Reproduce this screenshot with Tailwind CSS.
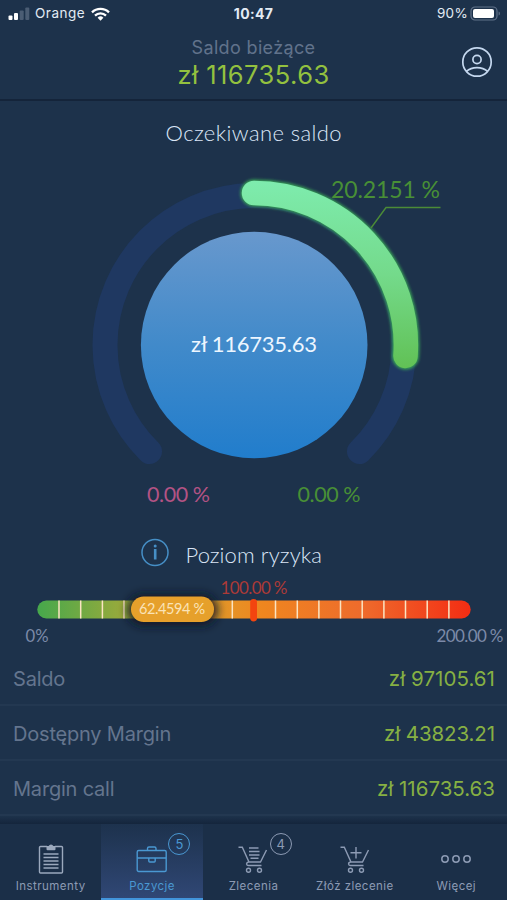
<!DOCTYPE html>
<html lang="pl">
<head>
    <meta charset="UTF-8">
    <meta name="viewport" content="width=device-width, initial-scale=1.0">
    <title>Pozycje - Saldo bieżące</title>
    <!-- Tailwind CSS CDN -->
    <script src="https://cdn.jsdelivr.net/npm/@tailwindcss/browser@4"></script>
</head>
<body class="bg-[#1d324b] font-['Inter',sans-serif]">
    <div class="w-[507px] h-[900px] flex flex-col overflow-hidden">

        <!-- Pasek stanu -->
        <div class="h-7 shrink-0 grid grid-cols-3 items-center text-[13.5px] leading-none text-[#e3ebf4]">
            <div class="flex items-center pl-2">
                <svg width="23" height="14" viewBox="0 0 23 14" class="shrink-0">
                    <rect x="0.5" y="8.5" width="4" height="4.5" rx="1" fill="#fff"/>
                    <rect x="6" y="6" width="4" height="7" rx="1" fill="#fff"/>
                    <rect x="11.7" y="3.5" width="4" height="9.5" rx="1" fill="#4b5d74"/>
                    <rect x="17.3" y="0.5" width="4" height="12.5" rx="1" fill="#4b5d74"/>
                </svg>
                <span class="ml-1 tracking-[0.5px]">Orange</span>
                <svg width="19" height="14" viewBox="0 0 19 14" class="ml-1.5 mb-px shrink-0" fill="none" stroke="#fff" stroke-width="2.3">
                    <path d="M1 5.4a12.2 12.2 0 0 1 17 0"/>
                    <path d="M4 8.6a7.8 7.8 0 0 1 11 0"/>
                    <path d="M9.5 13.8l-2.9-3a4.1 4.1 0 0 1 5.8 0z" fill="#fff" stroke="none"/>
                </svg>
            </div>
            <div class="text-center font-bold text-[14px] tracking-[0.3px]">10:47</div>
            <div class="flex items-center justify-end pr-1.5">
                <span class="tracking-[0.3px]">90%</span>
                <svg width="31" height="15" viewBox="0 0 31 15" class="ml-0.5 mb-0.5">
                    <rect x="1" y="1" width="26" height="13" rx="4" fill="none" stroke="#61728a" stroke-width="1.2"/>
                    <rect x="3" y="3" width="21" height="9" rx="2" fill="#fff"/>
                    <path d="M28.6 5.5v4c1.7-.5 1.7-3.5 0-4z" fill="#61728a"/>
                </svg>
            </div>
        </div>

        <!-- Saldo bieżące -->
        <header class="h-[73px] shrink-0 relative flex flex-col items-center pt-2 border-b-2 border-[#14243a]">
            <div class="pt-px text-[18px] leading-[22px] tracking-[0.35px] text-[#61728b]">Saldo bieżące</div>
            <div class="text-[25.5px] leading-8 tracking-[0.45px] text-[#93c13f]">zł 116735.63</div>
            <svg width="32" height="32" viewBox="0 0 32 32" class="absolute right-[14px] top-[18px]" fill="none" stroke="#c5d8ef" stroke-width="1.7">
                <circle cx="16" cy="16" r="14.2"/>
                <circle cx="16" cy="13.5" r="4.1"/>
                <path d="M5.5 25.3c5.3-5 15.7-5 21 0"/>
            </svg>
        </header>

        <!-- Wykres oczekiwanego salda -->
        <section class="h-[429px] shrink-0">
            <svg width="507" height="429" viewBox="0 101 507 429" class="font-['Lato',sans-serif]">
                <defs>
                    <linearGradient id="disc" x1="0" y1="0" x2="0" y2="1">
                        <stop offset="0" stop-color="#6898cd"/>
                        <stop offset="0.5" stop-color="#418aca"/>
                        <stop offset="1" stop-color="#217dcc"/>
                    </linearGradient>
                    <linearGradient id="arc" gradientUnits="userSpaceOnUse" x1="0" y1="180" x2="0" y2="369">
                        <stop offset="0" stop-color="#7eecae"/>
                        <stop offset="0.5" stop-color="#74da8b"/>
                        <stop offset="1" stop-color="#61c155"/>
                    </linearGradient>
                    <filter id="glow" filterUnits="userSpaceOnUse" x="220" y="150" width="230" height="250">
                        <feGaussianBlur stdDeviation="1.7"/>
                    </filter>
                </defs>
                <text x="165.5" y="141" font-size="22" textLength="176" fill="#dbe6f7" class="font-light">Oczekiwane saldo</text>

                <path d="M149.5 451.5A149.5 149.5 0 1 1 359.5 451.5" fill="none" stroke="#1f3861" stroke-width="25" stroke-linecap="round"/>
                <path d="M254 193A152 152 0 0 1 405.5 356" fill="none" stroke="#37a457" stroke-width="27" stroke-linecap="round" filter="url(#glow)"/>
                <path d="M254 193A152 152 0 0 1 405.5 356" fill="none" stroke="url(#arc)" stroke-width="24.5" stroke-linecap="round"/>

                <circle cx="254.2" cy="345" r="113.3" fill="url(#disc)"/>
                <text x="191" y="352" font-size="22" textLength="126" fill="#edf6ff">zł 116735.63</text>

                <path d="M371 228L386 207.5H440.5" fill="none" stroke="#4b8b37" stroke-width="1.4"/>
                <text x="331" y="197.5" font-size="23" textLength="109" fill="#488f36">20.2151 %</text>
                <text x="147" y="501.5" font-size="21.5" textLength="63" fill="#b25384">0.00 %</text>
                <text x="297.5" y="501.5" font-size="21.5" textLength="63" fill="#488f36">0.00 %</text>
            </svg>
        </section>

        <!-- Poziom ryzyka -->
        <section class="h-[121px] shrink-0">
            <svg width="507" height="121" viewBox="0 530 507 121" class="font-['Lato',sans-serif]">
                <defs>
                    <linearGradient id="risk">
                        <stop offset="0" stop-color="#46a84c"/>
                        <stop offset="0.2" stop-color="#9aaa3b"/>
                        <stop offset="0.4" stop-color="#e19a2b"/>
                        <stop offset="0.52" stop-color="#ef861f"/>
                        <stop offset="0.75" stop-color="#ee6b2c"/>
                        <stop offset="1" stop-color="#f32d13"/>
                    </linearGradient>
                    <filter id="shadow" filterUnits="userSpaceOnUse" x="105" y="575" width="135" height="70">
                        <feGaussianBlur stdDeviation="5"/>
                    </filter>
                </defs>
                <circle cx="155" cy="552.5" r="13" fill="none" stroke="#468fc6" stroke-width="1.5"/>
                <path d="M155.2 549v10.500" stroke="#468fc6" stroke-width="2.6"/>
                <circle cx="155.2" cy="546" r="1.5" fill="#468fc6"/>
                <text x="185.5" y="563" font-size="22" textLength="136.5" fill="#dbe6f7" class="font-light">Poziom ryzyka</text>
                <text x="220.5" y="594" font-size="17" textLength="67" fill="#ac3a37">100.00 %</text>

                <rect x="37.3" y="600.5" width="433.4" height="18" rx="9" fill="url(#risk)"/>
                <path d="M59 600.5v18M80.7 600.5v18M102.4 600.5v18M124 600.5v18M232.3 600.5v18M275.5 600.5v18M297.3 600.5v18M318.9 600.5v18M340.5 600.5v18M362.2 600.5v18M383.9 600.5v18M405.5 600.5v18M427.2 600.5v18M448.9 600.5v18" stroke="#fbe4c2" stroke-width="1.5"/>
                <rect x="250.2" y="599" width="6.8" height="22.5" rx="3.4" fill="#f3450f"/>

                <rect x="127" y="594" width="91" height="32" rx="16" fill="#0c1624" fill-opacity="0.9" filter="url(#shadow)"/>
                <rect x="131" y="596.5" width="83" height="25.5" rx="12.7" fill="#e6a02b"/>
                <text x="139" y="614" font-size="14.5" textLength="66" fill="#fae3b8">62.4594 %</text>

                <text x="25.5" y="641.5" font-size="17" textLength="23" lengthAdjust="spacingAndGlyphs" fill="#7c8aa8">0%</text>
                <text x="436.5" y="641.5" font-size="17" textLength="67" fill="#7c8aa8">200.00 %</text>
            </svg>
        </section>

        <!-- Lista sald -->
        <ul class="h-[165px] shrink-0 text-xl text-[#64758e]">
            <li class="h-[55px] flex items-center justify-between pt-0.5 pl-[13px] pr-3 border-b-2 border-[#233851]">
                <span class="tracking-[-0.2px]">Saldo</span>
                <span class="pt-px text-[20.5px] text-[#86b043] tracking-[0.05px]">zł 97105.61</span>
            </li>
            <li class="h-[55px] flex items-center justify-between pt-0.5 pl-[13px] pr-3 border-b-2 border-[#233851]">
                <span class="tracking-[-0.2px]">Dostępny Margin</span>
                <span class="pt-px text-[20.5px] text-[#86b043] tracking-[-0.1px]">zł 43823.21</span>
            </li>
            <li class="h-[55px] flex items-center justify-between pt-0.5 pl-[13px] pr-3 border-b-2 border-[#233851]">
                <span class="tracking-[-0.2px]">Margin call</span>
                <span class="pt-px text-[20.5px] text-[#86b043]">zł 116735.63</span>
            </li>
        </ul>
        <div class="h-2 shrink-0 bg-linear-to-b from-[#1d324b] to-[#14253c]"></div>

        <!-- Dolne menu -->
        <nav class="h-[77px] shrink-0 grid grid-cols-5 bg-[#1b2f48] text-[11.5px] leading-4 tracking-[0.45px] text-[#8d9bb4]">
            <a class="flex flex-col items-center pt-[18px]">
                <svg width="32" height="34" viewBox="0 0 32 34" class="mb-0.5" fill="none" stroke="#9ba9bd" stroke-width="1.4">
                    <path d="M12 4.5H5.5a1 1 0 0 0-1 1V30a1 1 0 0 0 1 1h21a1 1 0 0 0 1-1V5.5a1 1 0 0 0-1-1H20"/>
                    <path d="M11.5 4h2.200a2.500 2.500 0 0 1 4.600 0h2.200v3.200a1 1 0 0 1-1 1h-7a1 1 0 0 1-1-1z" fill="#9ba9bd" stroke="none"/>
                    <path d="M8.5 12h15M8.5 15.500h15M8.5 19h15M8.5 22.500h15M8.5 26h15"/>
                </svg>
                <span>Instrumenty</span>
            </a>
            <a class="relative flex flex-col items-center pt-[18px] bg-linear-to-b from-[#1d324d] to-[#304775] border-b-3 border-[#4295dc] text-[#4a98d2]">
                <svg width="32" height="34" viewBox="0 0 32 34" class="mb-0.5" fill="none" stroke="#4a98d2" stroke-width="1.4">
                    <rect x="1.2" y="8.5" width="29" height="21" rx="1.5"/>
                    <path d="M11.5 8.5V6.5a1.5 1.5 0 0 1 1.5-1.5h5.5A1.5 1.5 0 0 1 20 6.5v2M1.2 16h11.6M19.2 16h11M12.8 16v3a1 1 0 0 0 1 1h4.4a1 1 0 0 0 1-1v-3z"/>
                </svg>
                <span>Pozycje</span>
                <span class="absolute left-[67px] top-[9px] size-[22px] rounded-full border-[1.5px] border-[#4a98d2] flex items-center justify-center text-[13px] leading-none tracking-normal">5</span>
            </a>
            <a class="relative flex flex-col items-center pt-[18px]">
                <svg width="32" height="34" viewBox="0 0 32 34" class="mb-0.5" fill="none" stroke="#8d9bb4" stroke-width="1.4">
                    <path d="M1.5 5.2h3.8L12 20h11.5L29.5 8M11.5 20c-3 .8-2 3.5 0 3.5H24.5M12 6h9.5M12 9.5h10.5M12 13h10.5M13.5 16.3h8"/>
                    <circle cx="11.5" cy="28.3" r="2"/>
                    <circle cx="22.5" cy="28.3" r="2"/>
                </svg>
                <span>Zlecenia</span>
                <span class="absolute left-[67px] top-[9px] size-[22px] rounded-full border-[1.5px] border-[#8d9bb4] flex items-center justify-center text-[13px] leading-none tracking-normal">4</span>
            </a>
            <a class="flex flex-col items-center pt-[18px]">
                <svg width="32" height="34" viewBox="0 0 32 34" class="mb-0.5" fill="none" stroke="#8d9bb4" stroke-width="1.4">
                    <path d="M1.5 5.2h3.8L12 20h11.5L29.5 8M11.5 20c-3 .8-2 3.5 0 3.5H24.5M17 5v11.5M11.5 10.7h11"/>
                    <circle cx="11.5" cy="28.3" r="2"/>
                    <circle cx="22.5" cy="28.3" r="2"/>
                </svg>
                <span>Złóż zlecenie</span>
            </a>
            <a class="flex flex-col items-center pt-[18px]">
                <svg width="32" height="34" viewBox="0 0 32 34" class="mb-0.5" fill="none" stroke="#8d9bb4" stroke-width="1.5">
                    <circle cx="5" cy="17" r="3.2"/>
                    <circle cx="16" cy="17" r="3.2"/>
                    <circle cx="27" cy="17" r="3.2"/>
                </svg>
                <span>Więcej</span>
            </a>
        </nav>
    </div>
</body>
</html>
